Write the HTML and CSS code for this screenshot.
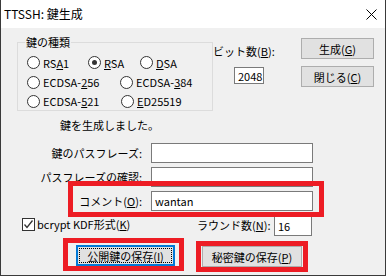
FILE: index.html
```html
<!DOCTYPE html>
<html lang="ja">
<head>
    <meta charset="UTF-8">
    <title>TTSSH: 鍵生成</title>
    <link rel="stylesheet" href="styles.css">
</head>
<body>
    <div class="window">
        <div class="titlebar">
            <span class="title">TTSSH: 鍵生成</span>
            <svg class="close" width="11" height="11" viewBox="0 0 11 11">
                <path d="M0.5 0.5 L10.5 10.5 M10.5 0.5 L0.5 10.5" stroke="#000" stroke-width="1" fill="none"/>
            </svg>
        </div>

        <div class="client">
            <div class="top">
                <div class="group">
                    <div class="group-label">鍵の種類</div>
                    <div class="radios">
                        <div class="radio-row">
                            <label class="opt w61"><span class="radio"></span><span>RS<u>A</u>1</span></label>
                            <label class="opt w52"><span class="radio checked"></span><span><u>R</u>SA</span></label>
                            <label class="opt"><span class="radio"></span><span><u>D</u>SA</span></label>
                        </div>
                        <div class="radio-row tall">
                            <label class="opt w93"><span class="radio"></span><span>ECDSA-<u>2</u>56</span></label>
                            <label class="opt"><span class="radio"></span><span>ECDSA-<u>3</u>84</span></label>
                        </div>
                        <div class="radio-row short">
                            <label class="opt w94"><span class="radio"></span><span>ECDSA-<u>5</u>21</span></label>
                            <label class="opt"><span class="radio"></span><span><u>E</u>D25519</span></label>
                        </div>
                    </div>
                </div>

                <div class="bits">
                    <div class="bits-label">ビット数(<u>B</u>):</div>
                    <div class="field bits-input">2048</div>
                </div>

                <div class="side-buttons">
                    <button class="btn">生成(<u>G</u>)</button>
                    <button class="btn">閉じる(<u>C</u>)</button>
                </div>
            </div>

            <p class="status">鍵を生成しました。</p>

            <div class="form">
                <div class="form-label">鍵のパスフレーズ:</div>
                <div class="field"></div>
                <div class="form-label">パスフレーズの確認:</div>
                <div class="field"></div>
                <div class="form-label">コメント(<u>O</u>):</div>
                <div class="field">wantan</div>
            </div>

            <div class="check-row">
                <label class="check">
                    <span class="checkbox">
                        <svg width="11" height="11" viewBox="0 0 11 11">
                            <path d="M1.5 5.5 L4 8.5 L9.5 1.5" stroke="#333" stroke-width="1.3" fill="none"/>
                        </svg>
                    </span>
                    <span>bcrypt KDF形式(<u>K</u>)</span>
                </label>
                <div class="rounds-label">ラウンド数(<u>N</u>):</div>
                <div class="field rounds-input">16</div>
            </div>

            <div class="bottom-buttons">
                <button class="btn default pub">公開鍵の保存(<u>I</u>)</button>
                <button class="btn priv">秘密鍵の保存(<u>P</u>)</button>
            </div>
        </div>

        <!-- red annotation boxes -->
        <div class="mark mark-comment"></div>
        <div class="mark mark-pub"></div>
        <div class="mark mark-priv"></div>
    </div>
</body>
</html>
```

FILE: styles.css
```css
/* classic windows dialog */
body {
    margin: 0;
    font-family: "Noto Sans CJK JP", "Liberation Sans", sans-serif;
    font-size: 11px;
    line-height: 12px;
    color: #000;
}

.window {
    position: relative;
    width: 386px;
    height: 276px;
    box-sizing: border-box;
    border: 1px solid #3a3a3a;
    border-top: none;
    background-color: #f0f0f0;
    overflow: hidden;
}

.titlebar {
    height: 28px;
    background-color: #fff;
    display: flex;
    align-items: center;
    justify-content: space-between;
    padding: 0 8px 0 3px;
}

.title {
    font-size: 12px;
}

u {
    text-decoration: underline;
    text-underline-offset: 1px;
}

/* top area: key type, bits, buttons */
.top {
    display: flex;
    align-items: flex-start;
}

.group {
    margin: 14px 0 0 16px;
    width: 196px;
    height: 69px;
    box-sizing: border-box;
    border: 1px solid #dcdcdc;
}

.group-label {
    display: table;
    margin: -7px 0 0 7px;
    padding: 0 1px;
    background-color: #f0f0f0;
}

.radios {
    margin-top: 5px;
    padding-left: 9px;
}

.radio-row {
    display: flex;
    align-items: center;
    height: 19px;
}

.radio-row.tall {
    height: 20px;
}

.radio-row.short {
    height: 18px;
}

.opt {
    display: flex;
    align-items: center;
    gap: 3px;
    white-space: nowrap;
}

.w61 { width: 61px; }
.w52 { width: 52px; }
.w93 { width: 93px; }
.w94 { width: 94px; }

.radio {
    position: relative;
    flex: none;
    width: 13px;
    height: 13px;
    box-sizing: border-box;
    border: 1px solid #333;
    border-radius: 50%;
    background-color: #fff;
}

.radio.checked::after {
    content: "";
    position: absolute;
    left: 3px;
    top: 3px;
    width: 5px;
    height: 5px;
    border-radius: 50%;
    background-color: #333;
}

.bits {
    width: 88px;
    margin-top: 17px;
}

.field {
    height: 20px;
    box-sizing: border-box;
    border: 1px solid #7a7a7a;
    background-color: #fff;
    padding: 0 3px;
    display: flex;
    align-items: center;
}

.bits-input {
    width: 30px;
    height: 17px;
    margin: 10px 0 0 21px;
}

.side-buttons {
    display: flex;
    flex-direction: column;
    gap: 7px;
    margin-top: 10px;
}

.btn {
    font: inherit;
    color: #000;
    height: 21px;
    width: 73px;
    padding: 0;
    background-color: #e1e1e1;
    border: 1px solid #adadad;
    white-space: nowrap;
}

.status {
    margin: 8px 0 0 59px;
}

/* passphrase / comment rows */
.form {
    display: grid;
    grid-template-columns: 141px 162px;
    column-gap: 9px;
    row-gap: 4px;
    margin-top: 12px;
    align-items: center;
}

.form-label {
    justify-self: end;
    white-space: nowrap;
}

.check-row {
    display: flex;
    align-items: center;
    height: 20px;
    margin-top: 5px;
}

.check {
    display: flex;
    align-items: center;
    gap: 2px;
    width: 175px;
    margin-left: 21px;
    margin-top: -4px;
    white-space: nowrap;
}

.checkbox {
    flex: none;
    width: 13px;
    height: 13px;
    box-sizing: border-box;
    border: 1px solid #333;
    background-color: #fff;
    display: flex;
    align-items: center;
    justify-content: center;
}

.rounds-label {
    width: 70px;
    text-align: right;
    margin-top: -2px;
    white-space: nowrap;
}

.rounds-input {
    width: 38px;
    margin-left: 7px;
}

.bottom-buttons {
    display: flex;
    align-items: flex-start;
    margin-top: 9px;
}

.pub {
    width: 99px;
    margin-left: 75px;
}

.priv {
    width: 100px;
    margin: 1px 0 0 27px;
}

.btn.default {
    position: relative;
    border: 2px solid #0078d7;
}

.btn.default::after {
    content: "";
    position: absolute;
    left: 1px;
    top: 1px;
    right: 1px;
    bottom: 1px;
    border: 1px dotted #000;
}

/* red highlight frames */
.mark {
    position: absolute;
    border: 5px solid #ed1c24;
    box-sizing: border-box;
}

.mark-comment {
    left: 67px;
    top: 181px;
    width: 256px;
    height: 36px;
}

.mark-pub {
    left: 62px;
    top: 238px;
    width: 121px;
    height: 33px;
}

.mark-priv {
    left: 195px;
    top: 241px;
    width: 112px;
    height: 31px;
}
```
